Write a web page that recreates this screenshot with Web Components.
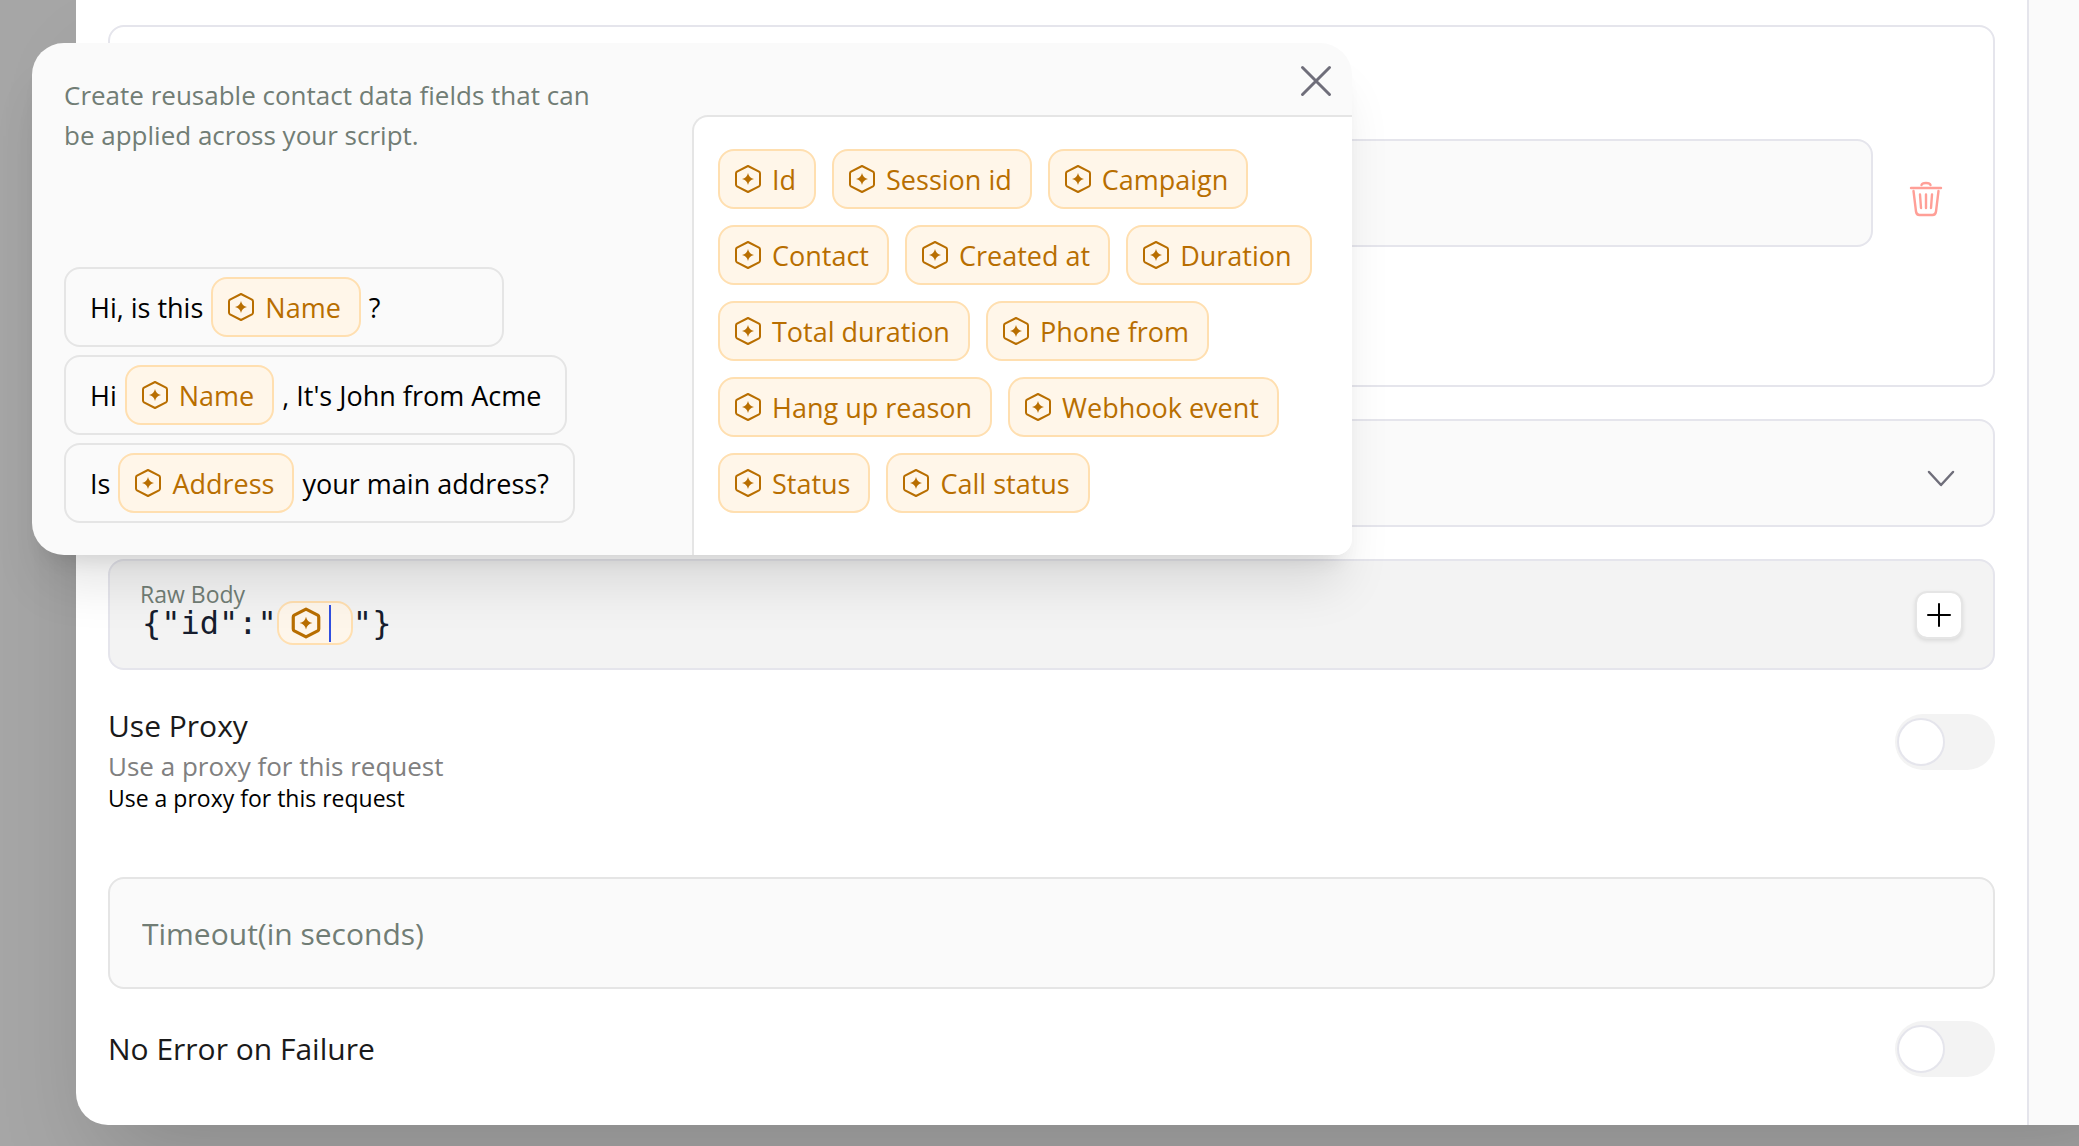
<!DOCTYPE html>
<html lang="en">
<head>
  <meta charset="UTF-8">
  <meta name="viewport" content="width=device-width, initial-scale=1.0">
  <title>API request</title>
  <style>
    * {
      box-sizing: border-box;
    }

    body {
      margin: 0;
      min-height: 100vh;
      background: #a6a6a6;
      font-family: "Segoe UI", "Open Sans", "Noto Sans", sans-serif;
      font-size: 27px;
      color: #000;

      --line: #e5e5ec;
      --line-neutral: #e5e5e5;
      --field: #fafafa;
      --muted: #717d75;
      --icon: #6f6e7a;
      --text-sm: 23px;
      --text-md: 26px;
      --text-lg: 30px;
    }
  </style>
</head>
<body>
  <request-page>
    <request-modal>
      <param-card></param-card>
      <select-field label="Body type"></select-field>
      <raw-body-field label="Raw Body"></raw-body-field>
      <toggle-row heading="Use Proxy" note="Use a proxy for this request">Use a proxy for this request</toggle-row>
      <text-field label="Timeout(in seconds)"></text-field>
      <toggle-row heading="No Error on Failure"></toggle-row>
    </request-modal>

    <variable-popover slot="popover">
      <span slot="intro">Create reusable contact data fields that can be applied across your script.</span>

      <example-line slot="examples">Hi, is this <var-token>Name</var-token> ?</example-line>
      <example-line slot="examples">Hi <var-token>Name</var-token> , It's John from Acme</example-line>
      <example-line slot="examples">Is <var-token>Address</var-token> your main address?</example-line>

      <var-token pick>Id</var-token>
      <var-token pick>Session id</var-token>
      <var-token pick>Campaign</var-token>
      <var-token pick>Contact</var-token>
      <var-token pick>Created at</var-token>
      <var-token pick>Duration</var-token>
      <var-token pick>Total duration</var-token>
      <var-token pick>Phone from</var-token>
      <var-token pick>Hang up reason</var-token>
      <var-token pick>Webhook event</var-token>
      <var-token pick>Status</var-token>
      <var-token pick>Call status</var-token>
    </variable-popover>
  </request-page>

  <script>
    const base = `
      *, *::before { box-sizing: border-box; }
      button, input, select { font: inherit; color: inherit; margin: 0; }
      button { cursor: pointer; }
      svg { display: block; flex: none; }
    `;

    // hexagon with a four pointed star, used by every variable token
    const hexIcon = (size, stroke) => `
      <svg width="${size}" height="${size}" viewBox="0 0 32 32" fill="none" aria-hidden="true">
        <path d="M16 3 L27 8.6 Q28 9.2 28 10.4 V21.6 Q28 22.8 27 23.4 L16 29 L5 23.4 Q4 22.8 4 21.6 V10.4 Q4 9.2 5 8.6 Z"
          stroke="currentColor" stroke-width="${stroke}" stroke-linejoin="round"/>
        <path d="M16 10 Q17 15 22 16 Q17 17 16 22 Q15 17 10 16 Q15 15 16 10 Z" fill="currentColor"/>
      </svg>`;

    class RequestPage extends HTMLElement {
      constructor() {
        super();
        this.attachShadow({ mode: 'open' });
        this.shadowRoot.innerHTML = `
          <style>
            ${base}
            :host {
              display: block;
              position: relative;
              overflow: hidden;
              min-height: 100vh;
              padding: 0 0 21px 76px;
            }
          </style>
          <slot></slot>
          <slot name="popover"></slot>
        `;
      }
    }

    class RequestModal extends HTMLElement {
      constructor() {
        super();
        this.attachShadow({ mode: 'open' });
        this.shadowRoot.innerHTML = `
          <style>
            ${base}
            :host {
              display: flex;
              margin-right: -80px;
              background: #fff;
              border-radius: 0 0 0 32px;
              box-shadow: 0 50px 100px -24px rgba(0, 0, 0, .18);
            }
            main {
              flex: 1;
              padding: 25px 32px 48px;
              border-right: 2px solid var(--line);
              display: flex;
              flex-direction: column;
              gap: 32px;
            }
            aside {
              width: 130px;
              background: var(--field);
            }
          </style>
          <main><slot></slot></main>
          <aside></aside>
        `;
      }
    }

    class ParamCard extends HTMLElement {
      constructor() {
        super();
        this.attachShadow({ mode: 'open' });
        this.shadowRoot.innerHTML = `
          <style>
            ${base}
            :host {
              display: flex;
              align-items: center;
              gap: 24px;
              padding: 112px 38px 138px 30px;
              border: 2px solid var(--line);
              border-radius: 16px;
            }
            input {
              flex: 1;
              height: 108px;
              padding: 0 32px;
              border: 2px solid var(--line);
              border-radius: 16px;
              background: var(--field);
            }
            button {
              padding: 0;
              border: 0;
              background: none;
              color: #ff9f97;
            }
          </style>
          <input type="text" aria-label="Value">
          <button type="button" aria-label="Delete">
            <svg width="58" height="58" viewBox="0 0 58 58" fill="none" stroke="currentColor" stroke-width="2.400" stroke-linecap="round" stroke-linejoin="round">
              <path d="M14 24 H44"/>
              <path d="M24.500 21 Q25 19 29 19 Q33 19 33.500 21"/>
              <path d="M16.500 27 L19 47.500 Q19.500 51 22.500 51 H35.500 Q38.500 51 39 47.500 L41.500 27"/>
              <path d="M23 30.500 L24 44 M29 30.500 V44 M35 30.500 L34 44"/>
            </svg>
          </button>
        `;
      }
    }

    class SelectField extends HTMLElement {
      constructor() {
        super();
        this.attachShadow({ mode: 'open' });
        this.shadowRoot.innerHTML = `
          <style>
            ${base}
            :host {
              display: grid;
              align-items: center;
            }
            select, svg {
              grid-area: 1 / 1;
            }
            select {
              appearance: none;
              width: 100%;
              height: 108px;
              padding: 0 32px;
              border: 2px solid var(--line);
              border-radius: 16px;
              background: var(--field);
            }
            svg {
              justify-self: end;
              margin-right: 36px;
              color: var(--icon);
              pointer-events: none;
            }
          </style>
          <select aria-label="${this.getAttribute('label')}"><option></option></select>
          <svg width="36" height="36" viewBox="0 0 36 36" fill="none" stroke="currentColor" stroke-width="2.500" stroke-linecap="round" stroke-linejoin="round">
            <path d="M6 17 L18 30 L30 17"/>
          </svg>
        `;
      }
    }

    class RawBodyField extends HTMLElement {
      constructor() {
        super();
        this.attachShadow({ mode: 'open' });
        this.shadowRoot.innerHTML = `
          <style>
            ${base}
            :host {
              position: relative;
              display: flex;
              align-items: center;
              justify-content: space-between;
              padding: 0 30px 0 32px;
              border: 2px solid var(--line);
              border-radius: 16px;
              background: #f3f3f3;
            }
            /* floating label over the editor */
            .label {
              position: absolute;
              left: 30px;
              top: 17px;
              font-size: var(--text-sm);
              line-height: 32px;
              color: var(--muted);
            }
            .editor {
              flex: 1;
              display: flex;
              align-items: center;
              padding: 40px 0 23px;
              line-height: 44px;
              font-family: "DejaVu Sans Mono", monospace;
              font-size: 32px;
              color: #161d2e;
              outline: none;
            }
            .chip {
              display: flex;
              align-items: center;
              gap: 6px;
              width: 76px;
              height: 44px;
              padding-left: 10px;
              border: 2px solid #ffdfb0;
              border-radius: 16px;
              background: rgba(255, 246, 233, .85);
              color: #b86e00;
            }
            .caret {
              width: 2px;
              height: 37px;
              background: #3250e0;
            }
            button {
              display: grid;
              place-items: center;
              width: 48px;
              height: 48px;
              padding: 0;
              border: 2px solid var(--line-neutral);
              border-radius: 12px;
              background: #fff;
              background-clip: padding-box;
              color: #000;
              box-shadow: 0 2px 4px rgba(0, 0, 0, .1);
            }
          </style>
          <span class="label" id="label">${this.getAttribute('label')}</span>
          <div class="editor" role="textbox" contenteditable="true" spellcheck="false" aria-labelledby="label"><span>{"id":"</span><span class="chip" contenteditable="false">${hexIcon(34, 3)}<span class="caret"></span></span><span>"}</span></div>
          <button type="button" aria-label="Insert variable">
            <svg width="24" height="24" viewBox="0 0 24 24" fill="none" stroke="currentColor" stroke-width="2" stroke-linecap="round">
              <path d="M12 1 V23 M1 12 H23"/>
            </svg>
          </button>
        `;
      }
    }

    class TextField extends HTMLElement {
      constructor() {
        super();
        const label = this.getAttribute('label');
        this.attachShadow({ mode: 'open' });
        this.shadowRoot.innerHTML = `
          <style>
            ${base}
            :host {
              display: block;
              padding-top: 31px;
            }
            input {
              display: block;
              width: 100%;
              height: 112px;
              padding: 0 32px;
              border: 2px solid var(--line-neutral);
              border-radius: 16px;
              background: var(--field);
              font-size: var(--text-lg);
            }
            input::placeholder {
              color: var(--muted);
              opacity: 1;
            }
          </style>
          <input type="text" inputmode="numeric" placeholder="${label}" aria-label="${label}">
        `;
      }
    }

    class ToggleRow extends HTMLElement {
      constructor() {
        super();
        const note = this.getAttribute('note');
        this.attachShadow({ mode: 'open' });
        this.shadowRoot.innerHTML = `
          <style>
            ${base}
            :host {
              display: block;
              font-size: var(--text-sm);
              line-height: 32px;
            }
            .row {
              display: flex;
              align-items: center;
              justify-content: space-between;
            }
            label {
              font-size: var(--text-lg);
              line-height: 48px;
              color: #1a1a1a;
            }
            .note {
              font-size: var(--text-md);
              color: #808080;
            }
            input {
              appearance: none;
              display: flex;
              align-items: center;
              width: 100px;
              height: 56px;
              padding: 0 2px;
              border-radius: 28px;
              background: #f3f3f3;
              cursor: pointer;
            }
            input::before {
              content: "";
              width: 48px;
              height: 48px;
              border: 2px solid var(--line);
              border-radius: 50%;
              background: #fff;
            }
            input:checked {
              justify-content: flex-end;
              background: #ffdfb0;
            }
          </style>
          <div class="row">
            <div>
              <label for="toggle">${this.getAttribute('heading')}</label>
              ${note ? `<div class="note">${note}</div>` : ''}
            </div>
            <input type="checkbox" role="switch" id="toggle">
          </div>
          <slot></slot>
        `;
      }
    }

    class VarToken extends HTMLElement {
      constructor() {
        super();
        const tag = this.hasAttribute('pick') ? 'button' : 'span';
        this.attachShadow({ mode: 'open' });
        this.shadowRoot.innerHTML = `
          <style>
            ${base}
            :host {
              display: inline-flex;
            }
            .token {
              display: flex;
              align-items: center;
              gap: 8px;
              height: 60px;
              padding: 0 18px 0 12px;
              border: 2px solid #ffdfb0;
              border-radius: 16px;
              background: #fff6e9;
              color: #b86e00;
              white-space: nowrap;
            }
          </style>
          <${tag} class="token">${hexIcon(32, 2)}<span><slot></slot></span></${tag}>
        `;
      }
    }

    class ExampleLine extends HTMLElement {
      constructor() {
        super();
        this.attachShadow({ mode: 'open' });
        this.shadowRoot.innerHTML = `
          <style>
            ${base}
            :host {
              display: flex;
              align-items: center;
              gap: 8px;
              min-width: 440px;
              padding: 8px 24px;
              border: 2px solid var(--line-neutral);
              border-radius: 16px;
              white-space: nowrap;
            }
          </style>
          <slot></slot>
        `;
      }
    }

    class VariablePopover extends HTMLElement {
      constructor() {
        super();
        this.attachShadow({ mode: 'open' });
        this.shadowRoot.innerHTML = `
          <style>
            ${base}
            :host {
              position: absolute;
              top: 43px;
              left: 32px;
              width: min(1320px, calc(100% - 64px));
              min-height: 512px;
              display: grid;
              grid-template-columns: 1fr 1fr;
              border-radius: 32px 32px 16px 32px;
              background: var(--field);
              box-shadow: 0 40px 50px -10px rgba(0, 0, 0, .1), 0 16px 20px -12px rgba(0, 0, 0, .1);
            }
            .left {
              display: flex;
              flex-direction: column;
              justify-content: space-between;
              padding: 32px;
            }
            p {
              max-width: 540px;
              margin: 0;
              font-size: var(--text-md);
              line-height: 40px;
              color: var(--muted);
            }
            .examples {
              display: flex;
              flex-direction: column;
              align-items: flex-start;
              gap: 8px;
            }
            .right {
              display: flex;
              flex-direction: column;
            }
            header {
              display: flex;
              justify-content: flex-end;
              padding: 18px 16px 14px;
            }
            header button {
              padding: 0;
              border: 0;
              background: none;
              color: var(--icon);
            }
            .tokens {
              flex: 1;
              display: flex;
              flex-wrap: wrap;
              align-content: flex-start;
              gap: 16px;
              padding: 32px 24px;
              border: solid var(--line-neutral);
              border-width: 2px 0 0 2px;
              border-radius: 16px 0 16px 0;
              background: #fff;
            }
          </style>
          <div class="left">
            <p><slot name="intro"></slot></p>
            <div class="examples"><slot name="examples"></slot></div>
          </div>
          <div class="right">
            <header>
              <button type="button" aria-label="Close">
                <svg width="40" height="40" viewBox="0 0 40 40" fill="none" stroke="currentColor" stroke-width="3" stroke-linecap="round">
                  <path d="M6.500 6.500 L33.500 33.500 M33.500 6.500 L6.500 33.500"/>
                </svg>
              </button>
            </header>
            <div class="tokens"><slot></slot></div>
          </div>
        `;
      }
    }

    customElements.define('request-page', RequestPage);
    customElements.define('request-modal', RequestModal);
    customElements.define('param-card', ParamCard);
    customElements.define('select-field', SelectField);
    customElements.define('raw-body-field', RawBodyField);
    customElements.define('text-field', TextField);
    customElements.define('toggle-row', ToggleRow);
    customElements.define('var-token', VarToken);
    customElements.define('example-line', ExampleLine);
    customElements.define('variable-popover', VariablePopover);
  </script>
</body>
</html>
